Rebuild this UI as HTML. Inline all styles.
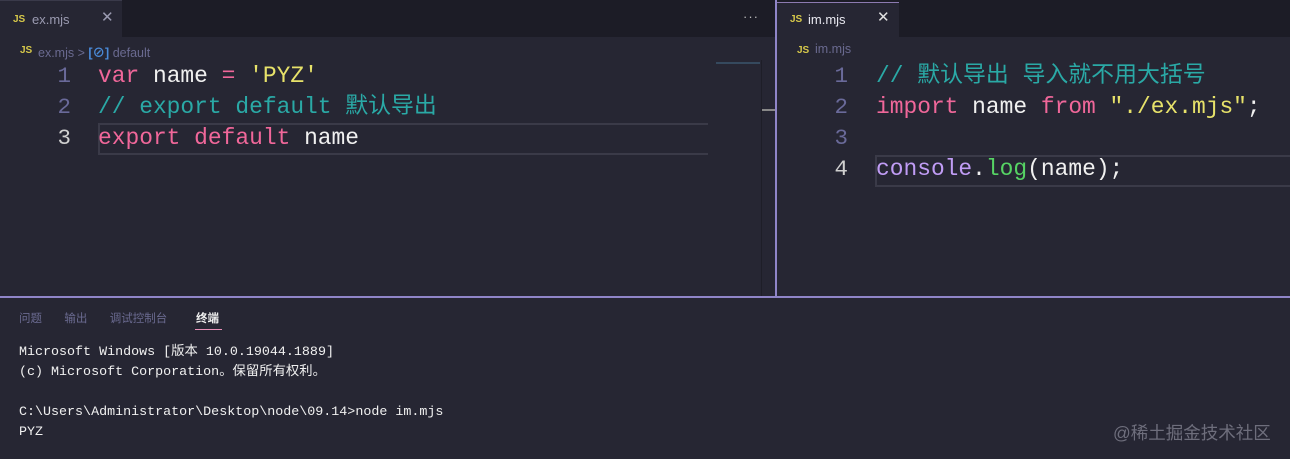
<!DOCTYPE html>
<html><head><meta charset="utf-8"><style>
*{margin:0;padding:0;box-sizing:border-box}
body{width:1290px;height:459px;background:#262633;overflow:hidden;position:relative;font-family:"Liberation Sans","Noto Sans CJK SC",sans-serif}
.abs{position:absolute}
.tabbar{top:0;height:37px;background:#1c1c26}
.mono{font-family:"Liberation Mono","Noto Sans CJK SC",monospace}
.code{font-size:22.9px;line-height:31px;white-space:pre;color:#f0f0f0}
.ln{font-size:22.5px;line-height:31px;color:#6a6a9a;text-align:right;width:30px}
.k{color:#f0679a}.s{color:#e7e26a}.c{color:#2aa9a6}.f{color:#56d364}.v{color:#c09cf5}
.js{color:#d6c84a;font-weight:bold;font-size:10px;font-family:"Liberation Sans",sans-serif}
</style></head><body>
<div class="abs tabbar" style="left:0;width:775px"></div>
<div class="abs tabbar" style="left:776px;width:514px"></div>
<div class="abs" style="left:0;top:0;width:122px;height:37px;background:#262633;border-top:1px solid #3a3a4a"></div>
<div class="abs js" style="left:13px;top:14px">JS</div>
<div class="abs" style="left:32px;top:12px;font-size:13px;color:#9a9ab0">ex.mjs</div>
<div class="abs" style="left:101px;top:8px;font-size:15px;color:#9a9ab0">✕</div>
<div class="abs" style="left:743px;top:9px;font-size:13px;color:#bbb;letter-spacing:1px">···</div>
<div class="abs" style="left:776px;top:2px;width:123px;height:35px;background:#262633;border-top:1px solid #8c7ab0"></div>
<div class="abs js" style="left:790px;top:14px">JS</div>
<div class="abs" style="left:808px;top:12px;font-size:13px;color:#e8e8f0">im.mjs</div>
<div class="abs" style="left:877px;top:8px;font-size:15px;color:#e0e0e0">✕</div>
<div class="abs js" style="left:20px;top:45px">JS</div>
<div class="abs" style="left:38px;top:42px;font-size:12.5px;color:#6a6a90">ex.mjs <span style="color:#6a6a90">&gt;</span> <span style="color:#4a8ad8;font-weight:bold">[⊘]</span> default</div>
<div class="abs js" style="left:797px;top:45px">JS</div>
<div class="abs" style="left:815px;top:42px;font-size:12.5px;color:#6a6a90">im.mjs</div>
<div class="abs mono ln" style="left:41px;top:61px">1<br>2<br><span style="color:#d0d0d0">3</span></div>
<div class="abs" style="left:98px;top:123px;width:610px;height:32px;border-top:2px solid #3a3a48;border-bottom:2px solid #3a3a48;border-left:2px solid #3a3a48"></div>
<div class="abs mono code" style="left:98px;top:61px"><span class="k">var</span> name <span class="k">=</span> <span class="s">'PYZ'</span>
<span class="c">// export default 默认导出</span>
<span class="k">export default</span> name</div>
<div class="abs" style="left:716px;top:62px;width:44px;height:2px;background:#3c5870;opacity:.7"></div>
<div class="abs" style="left:761px;top:60px;width:1px;height:236px;background:#1e1e28"></div>
<div class="abs" style="left:762px;top:109px;width:13px;height:2px;background:#888"></div>
<div class="abs" style="left:775px;top:0;width:2px;height:297px;background:#8f85c8"></div>
<div class="abs mono ln" style="left:818px;top:61px">1<br>2<br>3<br><span style="color:#d0d0d0">4</span></div>
<div class="abs" style="left:875px;top:155px;width:415px;height:32px;border-top:2px solid #3a3a48;border-bottom:2px solid #3a3a48;border-left:2px solid #3a3a48"></div>
<div class="abs mono code" style="left:876px;top:61px"><span class="c">// 默认导出 导入就不用大括号</span>
<span class="k">import</span> name <span class="k">from</span> <span class="s">"./ex.mjs"</span>;

<span class="v">console</span>.<span class="f">log</span>(name);</div>
<div class="abs" style="left:0;top:296px;width:1290px;height:2px;background:#8f85c8"></div>
<div class="abs" style="left:19px;top:310px;font-size:11.5px;color:#6a6a90;white-space:pre">问题       输出       调试控制台</div>
<div class="abs" style="left:196px;top:310px;font-size:11.5px;color:#f0f0f0;font-weight:bold">终端</div>
<div class="abs" style="left:195px;top:329px;width:27px;height:1px;background:#e890b8"></div>
<div class="abs mono" style="left:19px;top:343px;font-size:13.35px;line-height:20px;color:#f0f0f0;white-space:pre">Microsoft Windows [版本 10.0.19044.1889]
(c) Microsoft Corporation。保留所有权利。

C:\Users\Administrator\Desktop\node\09.14>node im.mjs
PYZ</div>
<div class="abs" style="left:1113px;top:420px;font-size:17.5px;color:#6e6e7c">@稀土掘金技术社区</div>
</body></html>
